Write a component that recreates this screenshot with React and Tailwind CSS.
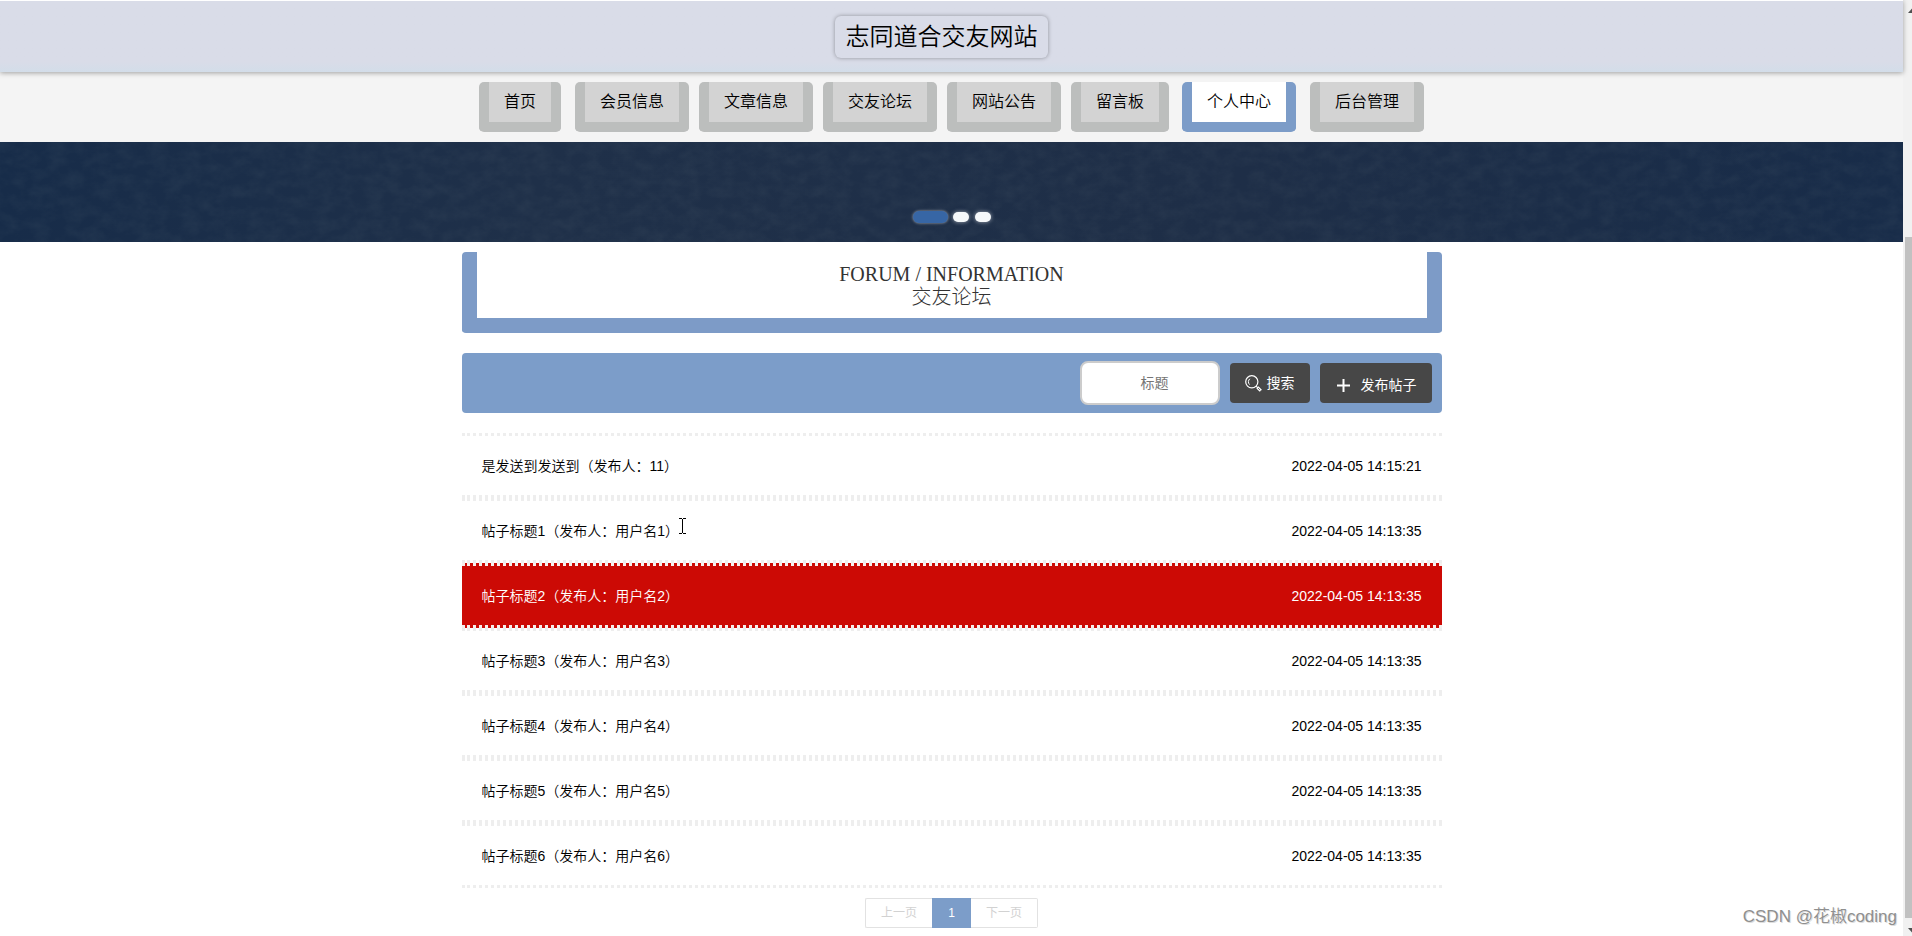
import React from 'react';

const NAV = [
  { label: '首页', cls: 'mr-[14px]' },
  { label: '会员信息', cls: 'mr-[10px]' },
  { label: '文章信息', cls: 'mr-[10px]' },
  { label: '交友论坛', cls: 'mr-[10px]' },
  { label: '网站公告', cls: 'mr-[10px]' },
  { label: '留言板', cls: 'mr-[13px]' },
  { label: '个人中心', cls: 'mr-[14px]', active: true },
  { label: '后台管理', cls: '' },
];

const POSTS = [
  { title: '是发送到发送到（发布人：11）', time: '2022-04-05 14:15:21' },
  { title: '帖子标题1（发布人：用户名1）', time: '2022-04-05 14:13:35' },
  { title: '帖子标题2（发布人：用户名2）', time: '2022-04-05 14:13:35', hover: true },
  { title: '帖子标题3（发布人：用户名3）', time: '2022-04-05 14:13:35' },
  { title: '帖子标题4（发布人：用户名4）', time: '2022-04-05 14:13:35' },
  { title: '帖子标题5（发布人：用户名5）', time: '2022-04-05 14:13:35' },
  { title: '帖子标题6（发布人：用户名6）', time: '2022-04-05 14:13:35' },
];

function Header() {
  return (
    <header className="relative z-10 h-[72px] border-t border-white bg-linear-to-b from-[#d9dce8] from-85% to-[#d3dde9] flex justify-center items-start pt-[15px] shadow-[0_1px_5px_rgba(0,0,0,0.35)]">
      <h1 className="mr-5 h-[42px] w-[213px] rounded-md text-center text-2xl leading-[42px] font-[350] text-black shadow-[0_0_4px_rgba(0,0,0,0.35)]">
        志同道合交友网站
      </h1>
    </header>
  );
}

function Nav() {
  return (
    <nav className="h-[70px] bg-[#f4f4f4] flex justify-center items-start pt-[10px]">
      {NAV.map((item) => (
        <a
          key={item.label}
          className={`h-[50px] px-[15px] border-x-10 border-b-10 rounded-[5px] text-base leading-[39px] font-[350] text-black whitespace-nowrap ${item.cls} ${
            item.active ? 'bg-white border-[#7c9cc8]' : 'bg-[#d3d3d3] border-[#bcbebd]'
          }`}
        >
          {item.label}
        </a>
      ))}
    </nav>
  );
}

function Banner() {
  return (
    <div className="relative h-[100px] overflow-hidden bg-[linear-gradient(90deg,#172c49_0%,#1f3049_28%,#1e2e47_65%,#182c49_100%)]">
      <svg className="absolute inset-0 w-full h-full opacity-8">
        <filter id="grain">
          <feTurbulence type="fractalNoise" baseFrequency="0.06 0.09" numOctaves="4" seed="4" />
          <feColorMatrix values="0 0 0 0 0.35  0 0 0 0 0.42  0 0 0 0 0.4  1.4 0 0 0 -0.45" />
        </filter>
        <rect width="100%" height="100%" filter="url(#grain)" />
      </svg>
      <div className="absolute inset-x-0 top-[69px] flex justify-center items-center gap-[6px]">
        <span className="w-[35px] h-3 -mr-px rounded-full bg-[#3766a5] shadow-[0_0_3px_rgba(255,255,255,0.6)]" />
        <span className="w-4 h-[10px] rounded-full bg-[#f5f8fa] shadow-[0_0_4px_rgba(255,255,255,0.6)]" />
        <span className="w-4 h-[10px] rounded-full bg-[#f5f8fa] shadow-[0_0_4px_rgba(255,255,255,0.6)]" />
      </div>
    </div>
  );
}

function SearchIcon() {
  return (
    <svg className="w-[17px] h-[17px]" viewBox="0 0 17 17" fill="none" stroke="currentColor">
      <circle cx="6.8" cy="6.8" r="6.1" strokeWidth="1.2" />
      <path d="M4.600 9.600A3.800 3.800 0 0 1 4.900 3.800" strokeWidth="1" />
      <path d="M11.200 11.200l1.600 1.600" strokeWidth="1.2" />
      <path d="M12.400 12.400l3.400 3.400" strokeWidth="3" />
      <path d="M13 13l2.200 2.200" stroke="#474747" strokeWidth="0.8" />
    </svg>
  );
}

function SearchBar() {
  return (
    <div className="mt-5 h-[60px] rounded bg-[#7c9dc9] flex items-center pr-[10px]">
      <input
        placeholder="标题"
        className="ml-auto w-[140px] h-11 pl-[14px] pr-1 border-2 border-[#ccc] rounded-lg bg-white text-center text-sm placeholder:text-[#757575]"
      />
      <button className="ml-[10px] w-20 h-10 rounded bg-[#474747] text-white text-sm flex items-center pl-[15px] gap-[5px]">
        <SearchIcon />
        搜索
      </button>
      <button className="ml-[10px] w-28 h-10 rounded bg-[#474747] text-white text-sm flex items-center pl-[17px] pt-1">
        <svg className="w-[13px] h-[13px] mr-[11px]" viewBox="0 0 13 13" fill="none" stroke="currentColor" strokeWidth="2">
          <path d="M6.5 0v13M0 6.5h13" />
        </svg>
        发布帖子
      </button>
    </div>
  );
}

function PostRow({ post }) {
  return (
    <li
      className={`h-[65px] px-5 border-y-3 border-dotted flex items-center justify-between text-sm font-[350] ${
        post.hover ? 'bg-[#cc0a05] border-[#f5f0ee] text-white' : 'border-[#eee] text-black'
      }`}
    >
      <span>{post.title}</span>
      <span>{post.time}</span>
    </li>
  );
}

function Pager() {
  return (
    <div className="mt-[10px] flex justify-center text-xs leading-[28px] text-[#d2d2d2] text-center">
      <a className="w-[67px] h-[30px] border border-r-0 border-[#e2e2e2] rounded-l-xs">上一页</a>
      <span className="w-[39px] h-[30px] bg-[#7c9dc9] text-white leading-[30px]">1</span>
      <a className="w-[67px] h-[30px] border border-l-0 border-[#e2e2e2] rounded-r-xs">下一页</a>
    </div>
  );
}

function Scrollbar() {
  return (
    <div className="w-[9px] h-full shrink-0 overflow-hidden bg-[#f1f1f1] flex flex-col items-start">
      <svg className="w-[9px] h-[237px] shrink-0" viewBox="0 0 9 237">
        <path d="M5 13l4.500-5v5z" fill="#505050" />
      </svg>
      <div className="ml-[2px] w-[7px] h-[681px] bg-[#c1c1c1]" />
      <svg className="w-[9px] h-[18px] shrink-0" viewBox="0 0 9 18">
        <path d="M5 10h4.500v5z" fill="#505050" />
      </svg>
    </div>
  );
}

export default function App() {
  return (
    <div className="relative flex w-[1912px] h-[936px] overflow-hidden bg-white font-['Liberation_Sans','Noto_Sans_CJK_SC',sans-serif]">
      <div className="flex-1">
        <Header />
        <Nav />
        <Banner />
        <main className="w-[980px] mx-auto pt-[10px]">
          <div className="h-[81px] pt-[11px] border-x-15 border-b-15 border-[#7d9bc7] rounded text-center text-xl leading-[22px] text-[#333] font-['Liberation_Serif','Noto_Sans_CJK_SC',serif]">
            <p>FORUM / INFORMATION</p>
            <p className="pt-px font-light">交友论坛</p>
          </div>
          <SearchBar />
          <ul className="mt-5">
            {POSTS.map((post) => (
              <PostRow key={post.title} post={post} />
            ))}
          </ul>
          <Pager />
        </main>
      </div>
      <Scrollbar />
      {/* text cursor */}
      <svg className="absolute left-[679px] top-[518px] w-[7px] h-4" viewBox="0 0 7 16" fill="none" stroke="#000">
        <path d="M0 .5h3M4 .5h3M3.500 1v14M0 15.500h3M4 15.500h3" />
      </svg>
      <div className="absolute right-[15px] bottom-[7px] text-[17px] leading-6 font-[350] text-[#8f8f8f] whitespace-nowrap [text-shadow:1px_1px_0_#ddd]">
        CSDN @花椒coding
      </div>
    </div>
  );
}
